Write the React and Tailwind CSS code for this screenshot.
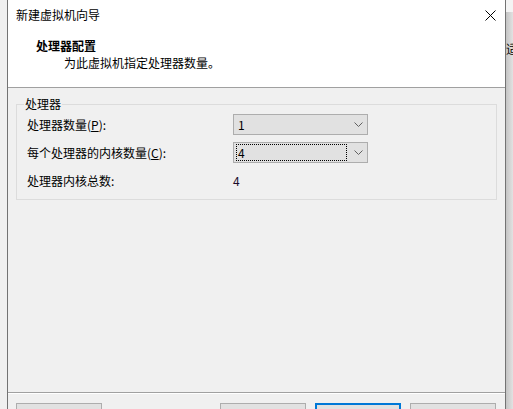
import React from 'react'

const font = "font-['Microsoft_YaHei_UI','Noto_Sans_CJK_SC',sans-serif]"

const Chevron = () => (
  <svg width="9" height="5" viewBox="0 0 9 5" className="shrink-0">
    <path d="M0.5 0.5 L4.5 4.5 L8.5 0.5" fill="none" stroke="#606060" strokeWidth="1" />
  </svg>
)

const Combo = ({ value, focused }) => (
  <div className="w-[135px] h-[21px] border border-[#adadad] bg-[#e1e1e1] flex items-center pl-[2px] pr-[4px]">
    <div className={`flex-1 h-[17px] flex items-center pl-[1px] mr-[7px] ${focused ? 'border border-dotted border-black' : 'border border-transparent'}`}>
      <span className="text-[12px] leading-none text-black">{value}</span>
    </div>
    <Chevron />
  </div>
)

const Button = ({ children, primary, className = '' }) => (
  <div className={`w-[86px] h-[23px] shrink-0 flex items-center justify-center text-[12px] leading-none text-black bg-[#e1e1e1] ${primary ? 'border-2 border-[#0078d7]' : 'border border-[#adadad]'} ${className}`}>
    {children}
  </div>
)

export default function App() {
  return (
    <div className={`w-[513px] h-[409px] overflow-hidden flex items-start bg-[#f0f0f0] ${font}`}>
      {/* desktop behind, left */}
      <div className="w-[7px] h-full shrink-0 bg-[#f0f0f0]" />

      {/* dialog window */}
      <div className="w-[499px] shrink-0 border-l border-r border-[#737373] flex flex-col bg-[#f0f0f0]">
        {/* title bar */}
        <div className="h-[30px] bg-white flex items-center justify-between pl-[8px] pr-[9px]">
          <span className="text-[12px] leading-none text-black">新建虚拟机向导</span>
          <svg width="11" height="11" viewBox="0 0 11 11">
            <path d="M0.5 0.5 L10.5 10.5 M10.5 0.5 L0.5 10.5" stroke="#000" strokeWidth="1" />
          </svg>
        </div>

        {/* header */}
        <div className="h-[58px] bg-white border-b border-[#a0a0a0] flex flex-col pt-[8px] pl-[28px]">
          <span className="text-[12px] leading-[16px] font-bold text-black">处理器配置</span>
          <span className="text-[12px] leading-[16px] text-black pl-[28px] mt-[1px]">为此虚拟机指定处理器数量。</span>
        </div>

        {/* body */}
        <div className="h-[304px] flex flex-col px-[8px] pt-[16px]">
          <div className="relative border border-[#dcdcdc] pt-[9px] pb-[8px] pl-[10px] flex flex-col gap-[7px]">
            <span className="absolute -top-[8px] left-[7px] px-[1px] bg-[#f0f0f0] text-[12px] leading-[14px] text-black">处理器</span>
            <div className="flex items-center h-[21px]">
              <span className="w-[206px] text-[12px] leading-none text-black">处理器数量(<span className="underline">P</span>):</span>
              <Combo value="1" />
            </div>
            <div className="flex items-center h-[21px]">
              <span className="w-[206px] text-[12px] leading-none text-black">每个处理器的内核数量(<span className="underline">C</span>):</span>
              <Combo value="4" focused />
            </div>
            <div className="flex items-center h-[21px]">
              <span className="w-[206px] text-[12px] leading-none text-black">处理器内核总数:</span>
              <span className="text-[12px] leading-none text-[#1a0a2a]">4</span>
            </div>
          </div>
        </div>

        {/* footer */}
        <div className="border-t border-[#a0a0a0] shadow-[inset_0_1px_0_#ffffff] pt-[10px] pb-[12px] px-[8px] flex items-start">
          <Button>帮助</Button>
          <div className="flex-1" />
          <div className="flex gap-[9px] pr-[1px]">
            <Button>&lt; 上一步(<span className="underline">B</span>)</Button>
            <Button primary>下一步(<span className="underline">N</span>) &gt;</Button>
            <Button>取消</Button>
          </div>
        </div>
      </div>

      {/* desktop behind, right */}
      <div className="w-[7px] h-full shrink-0 flex flex-col overflow-hidden">
        <div className="h-[12px] bg-[#f4f4f4]" />
        <div className="flex-1 bg-gradient-to-r from-[#c4c4c4] to-[#e2e2e2] flex flex-col pt-[31px]">
          <span className="text-[12px] leading-none text-black whitespace-nowrap">适</span>
        </div>
      </div>
    </div>
  )
}
